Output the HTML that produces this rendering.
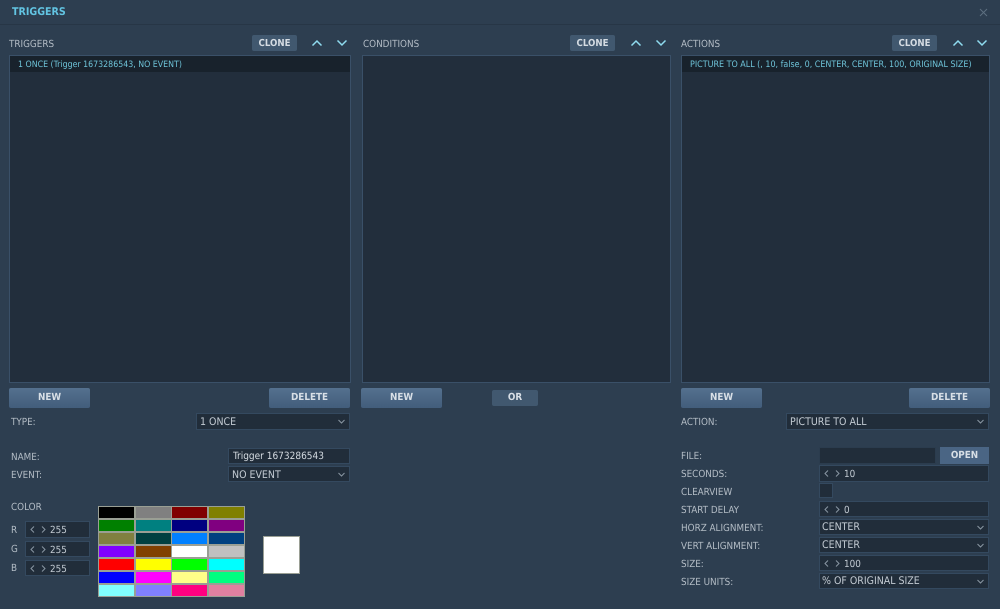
<!DOCTYPE html>
<html><head><meta charset="utf-8"><style>
html,body{margin:0;padding:0;width:1000px;height:609px;overflow:hidden;background:#2d3e50}
#r{position:absolute;left:0;top:0;width:1000px;height:609px;filter:blur(.3px);font-family:"DejaVu Sans Condensed","DejaVu Sans",sans-serif;font-stretch:condensed;text-rendering:geometricPrecision;font-size:10px;color:#b9c2cb}
.a{position:absolute;white-space:nowrap}
.l{position:absolute;white-space:nowrap;height:14px;line-height:14px;margin-top:2px;color:#b4bdc6;font-size:9.8px}
.list{position:absolute;background:#222e3c;border:1px solid #3a5068;box-sizing:border-box}
.sel{position:absolute;left:0;right:0;top:0;height:16px;line-height:18.5px;background:#18222c;color:#6ec3d8;white-space:nowrap;font-size:8.9px}
.clone{position:absolute;top:35px;height:16px;line-height:17.5px;background:#41586f;border-radius:2px;color:#d5dce3;font-weight:bold;text-align:center;width:45px;font-size:9.6px}
.btn{position:absolute;top:388px;height:20px;line-height:20px;width:81px;background:linear-gradient(#54708e,#425d7b);border-radius:2px;color:#d8dfe6;font-weight:bold;text-align:center;font-size:9.8px}
.f{position:absolute;box-sizing:border-box;height:16px;line-height:15px;background:#212d3a;border:1px solid #34495f;color:#c3cbd3;white-space:nowrap;padding-left:3px;font-size:10.5px}
.f svg{position:absolute;right:3px;top:4px}
.n{padding-left:24px;font-size:9.8px;line-height:17px}
.n svg{position:absolute;left:3px;top:3px;right:auto}
.s{padding-left:2px}
.sw{position:absolute;box-sizing:border-box;width:37px;height:13px;border:1px solid #9a9f94}
</style></head><body><div id="r">
<div class="a" style="left:0;top:0;width:1000px;height:24px;border-bottom:1px solid #273646;background:#2d3e50"></div>
<div class="a" style="left:12px;top:5px;line-height:15px;color:#62c4e2;font-weight:bold;font-size:10.6px">TRIGGERS</div>
<svg class="a" style="left:979px;top:8px" width="9" height="9" viewBox="0 0 9 9"><path d="M1 1L8 8M8 1L1 8" stroke="#5d6f80" stroke-width="1" fill="none"/></svg>

<div class="l" style="left:9px;top:36px">TRIGGERS</div>
<div class="l" style="left:363px;top:36px">CONDITIONS</div>
<div class="l" style="left:681px;top:36px">ACTIONS</div>

<div class="clone" style="left:252px">CLONE</div>
<div class="clone" style="left:570px">CLONE</div>
<div class="clone" style="left:892px">CLONE</div>

<svg class="a" style="left:311px;top:39px" width="12" height="8"><path d="M1.5 6.5L6 2L10.5 6.5" stroke="#8fdcf0" stroke-width="1.5" fill="none"/></svg>
<svg class="a" style="left:336px;top:39px" width="12" height="8"><path d="M1.5 1.5L6 6L10.5 1.5" stroke="#8fdcf0" stroke-width="1.5" fill="none"/></svg>
<svg class="a" style="left:630px;top:39px" width="12" height="8"><path d="M1.5 6.5L6 2L10.5 6.5" stroke="#8fdcf0" stroke-width="1.5" fill="none"/></svg>
<svg class="a" style="left:655px;top:39px" width="12" height="8"><path d="M1.5 1.5L6 6L10.5 1.5" stroke="#8fdcf0" stroke-width="1.5" fill="none"/></svg>
<svg class="a" style="left:952px;top:39px" width="12" height="8"><path d="M1.5 6.5L6 2L10.5 6.5" stroke="#8fdcf0" stroke-width="1.5" fill="none"/></svg>
<svg class="a" style="left:976px;top:39px" width="12" height="8"><path d="M1.5 1.5L6 6L10.5 1.5" stroke="#8fdcf0" stroke-width="1.5" fill="none"/></svg>

<div class="list" style="left:9px;top:55px;width:342px;height:328px"><div class="sel" style="padding-left:8px;font-size:8.75px">1 ONCE (Trigger 1673286543, NO EVENT)</div></div>
<div class="list" style="left:362px;top:55px;width:309px;height:328px"></div>
<div class="list" style="left:681px;top:55px;width:309px;height:328px"><div class="sel" style="padding-left:8px">PICTURE TO ALL (, 10, false, 0, CENTER, CENTER, 100, ORIGINAL SIZE)</div></div>

<div class="btn" style="left:9px">NEW</div>
<div class="btn" style="left:269px">DELETE</div>
<div class="btn" style="left:361px">NEW</div>
<div class="btn" style="left:492px;top:390px;width:46px;height:16px;line-height:16px;background:#41586f">OR</div>
<div class="btn" style="left:681px">NEW</div>
<div class="btn" style="left:909px">DELETE</div>

<div class="l" style="left:11px;top:414px">TYPE:</div>
<div class="f" style="left:196px;top:413px;width:154px;height:17px;line-height:16px">1 ONCE<svg width="9" height="7"><path d="M1.5 2L4.5 5L7.5 2" stroke="#8a97a3" fill="none"/></svg></div>
<div class="l" style="left:11px;top:449px">NAME:</div>
<div class="f" style="left:228px;top:448px;width:122px;color:#d5dbe1;padding-left:4px;font-size:10px;line-height:16px">Trigger 1673286543</div>
<div class="l" style="left:11px;top:467px">EVENT:</div>
<div class="f" style="left:228px;top:466px;width:122px;line-height:16px">NO EVENT<svg width="9" height="7"><path d="M1.5 2L4.5 5L7.5 2" stroke="#8a97a3" fill="none"/></svg></div>

<div class="l" style="left:11px;top:499px">COLOR</div>
<div class="l" style="left:11px;top:522px">R</div>
<div class="l" style="left:11px;top:541px">G</div>
<div class="l" style="left:11px;top:560px">B</div>
<div class="f n" style="left:25px;top:521px;width:65px;height:17px">255<svg width="20" height="9"><path d="M5 1.5L2 4.5L5 7.5M13 1.5L16 4.5L13 7.5" stroke="#8a97a3" fill="none"/></svg></div>
<div class="f n" style="left:25px;top:541px;width:65px">255<svg width="20" height="9"><path d="M5 1.5L2 4.5L5 7.5M13 1.5L16 4.5L13 7.5" stroke="#8a97a3" fill="none"/></svg></div>
<div class="f n" style="left:25px;top:560px;width:65px">255<svg width="20" height="9"><path d="M5 1.5L2 4.5L5 7.5M13 1.5L16 4.5L13 7.5" stroke="#8a97a3" fill="none"/></svg></div>

<div class="sw" style="left:98px;top:506px;background:#000"></div><div class="sw" style="left:135px;top:506px;background:#808080"></div><div class="sw" style="left:171px;top:506px;background:#800000"></div><div class="sw" style="left:208px;top:506px;background:#808000"></div>
<div class="sw" style="left:98px;top:519px;background:#008000"></div><div class="sw" style="left:135px;top:519px;background:#008080"></div><div class="sw" style="left:171px;top:519px;background:#000080"></div><div class="sw" style="left:208px;top:519px;background:#800080"></div>
<div class="sw" style="left:98px;top:532px;background:#808040"></div><div class="sw" style="left:135px;top:532px;background:#004040"></div><div class="sw" style="left:171px;top:532px;background:#0080ff"></div><div class="sw" style="left:208px;top:532px;background:#004080"></div>
<div class="sw" style="left:98px;top:545px;background:#8000ff"></div><div class="sw" style="left:135px;top:545px;background:#804000"></div><div class="sw" style="left:171px;top:545px;background:#fff"></div><div class="sw" style="left:208px;top:545px;background:#c0c0c0"></div>
<div class="sw" style="left:98px;top:558px;background:#f00"></div><div class="sw" style="left:135px;top:558px;background:#ff0"></div><div class="sw" style="left:171px;top:558px;background:#0f0"></div><div class="sw" style="left:208px;top:558px;background:#0ff"></div>
<div class="sw" style="left:98px;top:571px;background:#00f"></div><div class="sw" style="left:135px;top:571px;background:#f0f"></div><div class="sw" style="left:171px;top:571px;background:#ff8"></div><div class="sw" style="left:208px;top:571px;background:#00ff80"></div>
<div class="sw" style="left:98px;top:584px;background:#80ffff"></div><div class="sw" style="left:135px;top:584px;background:#8080ff"></div><div class="sw" style="left:171px;top:584px;background:#ff0080"></div><div class="sw" style="left:208px;top:584px;background:#e080a0"></div>
<div class="a" style="left:263px;top:536px;width:37px;height:38px;box-sizing:border-box;background:#fff;border:1px solid #9a9f94"></div>

<div class="l" style="left:681px;top:414px">ACTION:</div>
<div class="f" style="left:786px;top:413px;width:203px;height:17px;line-height:16px">PICTURE TO ALL<svg width="9" height="7"><path d="M1.5 2L4.5 5L7.5 2" stroke="#8a97a3" fill="none"/></svg></div>
<div class="l" style="left:681px;top:448px">FILE:</div>
<div class="f" style="left:819px;top:447px;width:117px;height:17px;border-color:#2b3c4e"></div>
<div class="a" style="left:940px;top:447px;width:49px;height:17px;line-height:18px;background:#4a6584;color:#d8dfe6;font-weight:bold;text-align:center;font-size:9.8px">OPEN</div>
<div class="l" style="left:681px;top:466px">SECONDS:</div>
<div class="f n" style="left:819px;top:465px;width:170px;height:17px">10<svg width="20" height="9"><path d="M5 1.5L2 4.5L5 7.5M13 1.5L16 4.5L13 7.5" stroke="#8a97a3" fill="none"/></svg></div>
<div class="l" style="left:681px;top:484px">CLEARVIEW</div>
<div class="a" style="left:819px;top:483px;width:14px;height:15px;box-sizing:border-box;background:#212d3a;border:1px solid #34495f"></div>
<div class="l" style="left:681px;top:502px">START DELAY</div>
<div class="f n" style="left:819px;top:501px;width:170px">0<svg width="20" height="9"><path d="M5 1.5L2 4.5L5 7.5M13 1.5L16 4.5L13 7.5" stroke="#8a97a3" fill="none"/></svg></div>
<div class="l" style="left:681px;top:520px">HORZ ALIGNMENT:</div>
<div class="f s" style="left:819px;top:519px;width:170px">CENTER<svg width="9" height="7"><path d="M1.5 2L4.5 5L7.5 2" stroke="#8a97a3" fill="none"/></svg></div>
<div class="l" style="left:681px;top:538px">VERT ALIGNMENT:</div>
<div class="f s" style="left:819px;top:537px;width:170px">CENTER<svg width="9" height="7"><path d="M1.5 2L4.5 5L7.5 2" stroke="#8a97a3" fill="none"/></svg></div>
<div class="l" style="left:681px;top:556px">SIZE:</div>
<div class="f n" style="left:819px;top:555px;width:170px">100<svg width="20" height="9"><path d="M5 1.5L2 4.5L5 7.5M13 1.5L16 4.5L13 7.5" stroke="#8a97a3" fill="none"/></svg></div>
<div class="l" style="left:681px;top:574px">SIZE UNITS:</div>
<div class="f s" style="left:819px;top:573px;width:170px">% OF ORIGINAL SIZE<svg width="9" height="7"><path d="M1.5 2L4.5 5L7.5 2" stroke="#8a97a3" fill="none"/></svg></div>
</div></body></html>
